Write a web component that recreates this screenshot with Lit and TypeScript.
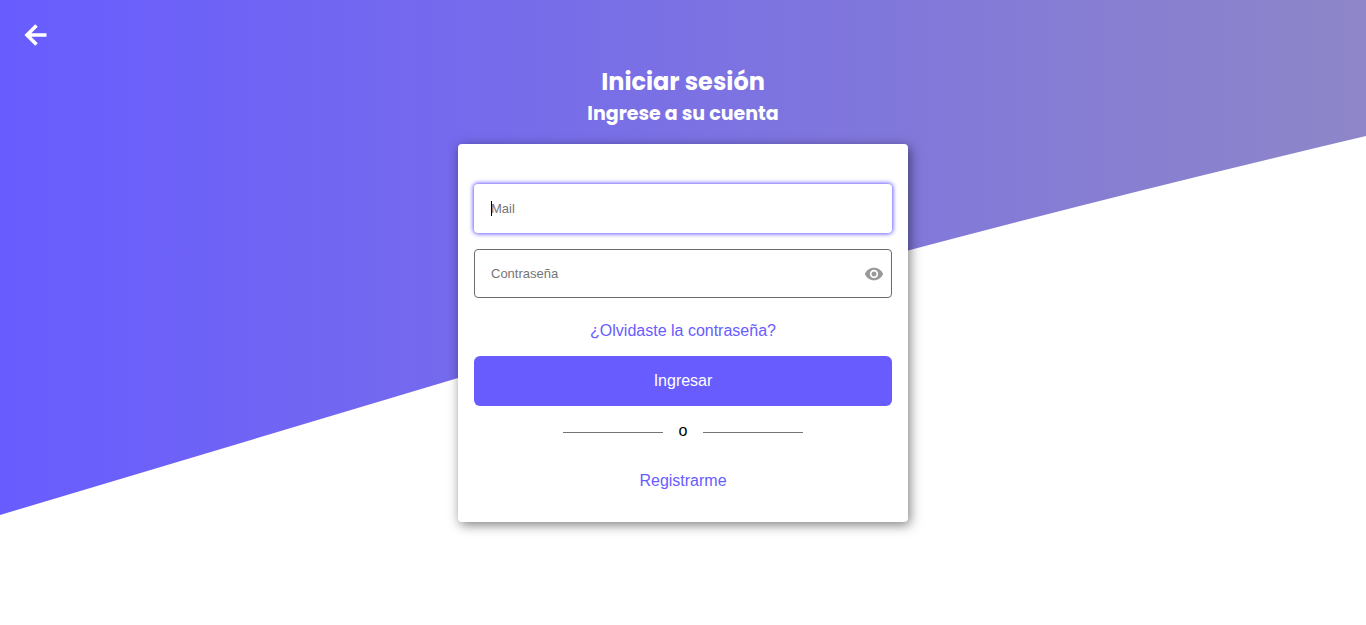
import { LitElement, html, css } from "lit";
import { customElement, state } from "lit/decorators.js";

@customElement("app-root")
export class AppRoot extends LitElement {
  @state() private showPassword = false;

  static styles = css`
    :host {
      display: block;
      position: relative;
      min-height: 100vh;
      font-family: "Liberation Sans", Arial, sans-serif;
      font-size: 16px;
      --accent: #685cfe;
    }
    * {
      box-sizing: border-box;
    }
    .backdrop {
      position: absolute;
      inset: 0;
      width: 100%;
      height: 100%;
      z-index: -1;
    }
    .page {
      display: flex;
      flex-direction: column;
      min-height: 100vh;
    }
    .topbar {
      display: flex;
      padding: 20px 20px 14px;
    }
    .back {
      display: flex;
      width: 30px;
      height: 30px;
      align-items: center;
      justify-content: center;
      color: #fff;
    }
    .heading {
      color: #fff;
      text-align: center;
      font-family: Poppins, Inter, sans-serif;
      font-weight: 700;
    }
    .title {
      margin: 0;
      font-size: 24px;
      line-height: 36px;
    }
    .subtitle {
      margin: 0;
      font-size: 19px;
      line-height: 28px;
    }
    .card {
      display: flex;
      flex-direction: column;
      width: 100%;
      max-width: 450px;
      margin: 16px auto;
      padding: 40px 16px 32px;
      background: #fff;
      border-radius: 4px;
      box-shadow: 2px 3px 12px rgba(0, 0, 0, 0.5);
    }
    .fields {
      display: grid;
      gap: 16px;
    }
    .field {
      display: grid;
      align-items: center;
    }
    .input {
      grid-area: 1 / 1;
      width: 100%;
      height: 49px;
      padding: 0 16px;
      border: 1px solid #6b6b6b;
      border-radius: 4px;
      background: #fff;
      font-family: "Liberation Sans", Arial, sans-serif;
      font-size: 13px;
      color: #000;
      caret-color: transparent;
      outline: none;
    }
    .input::placeholder {
      color: #757575;
    }
    .input:focus {
      border-color: transparent;
      box-shadow: 0 0 4px 1px var(--accent);
    }
    .caret {
      grid-area: 1 / 1;
      width: 1px;
      height: 15px;
      margin-left: 17px;
      background: #000;
      pointer-events: none;
      visibility: hidden;
    }
    .input:focus:placeholder-shown + .caret {
      visibility: visible;
    }
    .input:not(:placeholder-shown) {
      caret-color: auto;
    }
    .eye {
      grid-area: 1 / 1;
      justify-self: end;
      display: flex;
      margin-right: 8px;
      padding: 0;
      border: 0;
      background: none;
      color: #999;
      cursor: pointer;
    }
    .link {
      align-self: center;
      color: var(--accent);
      line-height: 18px;
      text-decoration: none;
    }
    .forgot {
      margin: 24px 0 16px;
    }
    .submit {
      height: 50px;
      border: 0;
      border-radius: 6px;
      background: var(--accent);
      color: #fff;
      font-family: inherit;
      font-size: 16px;
      cursor: pointer;
    }
    .divider {
      display: flex;
      align-items: center;
      justify-content: center;
      gap: 16px;
      margin: 16px 0 32px;
      line-height: 18px;
    }
    .rule {
      width: 100px;
      height: 1px;
      margin-top: 2px;
      background: #757575;
    }
  `;

  firstUpdated() {
    this.renderRoot.querySelector<HTMLInputElement>("#mail")?.focus();
  }

  render() {
    return html`
      <svg class="backdrop" viewBox="0 0 1366 625" preserveAspectRatio="none" aria-hidden="true">
        <defs>
          <linearGradient id="fade">
            <stop offset="0" stop-color="#685cff" />
            <stop offset="1" stop-color="#8e86c8" />
          </linearGradient>
        </defs>
        <path d="M0 0H1366V136Q1120 194 908 250.500Q683 311 458 378L0 515Z" fill="url(#fade)" />
      </svg>
      <div class="page">
        <nav class="topbar">
          <a class="back" href="#" aria-label="Volver">
            <svg width="24" height="24" viewBox="0 0 24 24" fill="none" stroke="currentColor" stroke-width="3.600">
              <path d="M13.500 2.500L4 12L13.500 21.500M4 12H23.500" />
            </svg>
          </a>
        </nav>
        <header class="heading">
          <h1 class="title">Iniciar sesión</h1>
          <h2 class="subtitle">Ingrese a su cuenta</h2>
        </header>
        <form class="card" @submit=${(e: Event) => e.preventDefault()}>
          <div class="fields">
            <div class="field">
              <input class="input" id="mail" type="email" placeholder="Mail" aria-label="Mail" />
              <span class="caret"></span>
            </div>
            <div class="field">
              <input
                class="input"
                type=${this.showPassword ? "text" : "password"}
                placeholder="Contraseña"
                aria-label="Contraseña"
              />
              <span class="caret"></span>
              <button
                class="eye"
                type="button"
                aria-label="Mostrar contraseña"
                @click=${() => (this.showPassword = !this.showPassword)}
              >
                <svg width="20" height="20" viewBox="0 0 24 24" fill="currentColor">
                  <path
                    d="M12 4.500C7 4.500 2.730 7.610 1 12c1.730 4.390 6 7.500 11 7.500s9.270-3.110 11-7.500c-1.730-4.390-6-7.500-11-7.500zM12 17c-2.760 0-5-2.240-5-5s2.240-5 5-5 5 2.240 5 5-2.240 5-5 5zm0-8c-1.660 0-3 1.340-3 3s1.340 3 3 3 3-1.340 3-3-1.340-3-3-3z"
                  />
                </svg>
              </button>
            </div>
          </div>
          <a class="link forgot" href="#">¿Olvidaste la contraseña?</a>
          <button class="submit" type="submit">Ingresar</button>
          <div class="divider"><span class="rule"></span>o<span class="rule"></span></div>
          <a class="link" href="#">Registrarme</a>
        </form>
      </div>
    `;
  }
}
